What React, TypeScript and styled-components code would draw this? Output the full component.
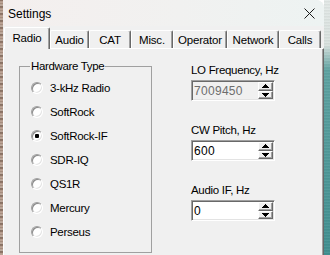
import React from 'react';
import styled, { createGlobalStyle } from 'styled-components';

const GlobalStyle = createGlobalStyle`
  html, body { margin: 0; padding: 0; }
  body {
    font-family: "Liberation Sans", Arial, sans-serif;
    font-size: 11px;
    color: #000;
  }
`;

const tabs = [
    { label: 'Radio', w: 46 },
    { label: 'Audio', w: 39 },
    { label: 'CAT', w: 42 },
    { label: 'Misc.', w: 42 },
    { label: 'Operator', w: 54 },
    { label: 'Network', w: 52 },
    { label: 'Calls', w: 42 },
];

const hardware = ['3-kHz Radio', 'SoftRock', 'SoftRock-IF', 'SDR-IQ', 'QS1R', 'Mercury', 'Perseus'];

const fields = [
    { label: 'LO Frequency, Hz', value: '7009450', disabled: true },
    { label: 'CW Pitch, Hz', value: '600', disabled: false },
    { label: 'Audio IF, Hz', value: '0', disabled: false },
];

const Arrow = ({ down }: { down?: boolean }) => (
    <svg width="7" height="4" viewBox="0 0 7 4" shapeRendering="crispEdges">
        {[0, 1, 2, 3].map(i => {
            const row = down ? 3 - i : i;
            return <rect key={i} x={3 - row} y={i} width={row * 2 + 1} height={1} fill="#000" />;
        })}
    </svg>
);

export default function App() {
    return (
        <>
            <GlobalStyle />
            <Screen>
                <Wallpaper />
                <Window>
                    <TitleBar>
                        <Title>Settings</Title>
                        <svg width="11" height="11" viewBox="0 0 11 11">
                            <path d="M0.5 0.5 L10.5 10.5 M10.5 0.5 L0.5 10.5" stroke="#1a1a1a" strokeWidth="1" />
                        </svg>
                    </TitleBar>
                    <TabRow>
                        {tabs.map((t, i) => (
                            <Tab key={t.label} $w={t.w} $active={i === 0}>{t.label}</Tab>
                        ))}
                    </TabRow>
                    <Panel>
                        <GroupBox>
                            <Legend>Hardware Type</Legend>
                            {hardware.map((h, i) => (
                                <RadioRow key={h}>
                                    <RadioCircle $checked={i === 2} />
                                    <span>{h}</span>
                                </RadioRow>
                            ))}
                        </GroupBox>
                        <FieldColumn>
                            {fields.map(f => (
                                <Field key={f.label}>
                                    <FieldLabel>{f.label}</FieldLabel>
                                    <SpinBox $disabled={f.disabled}>
                                        <SpinValue $disabled={f.disabled}>{f.value}</SpinValue>
                                        <Spinner>
                                            <SpinButton><Arrow /></SpinButton>
                                            <SpinButton><Arrow down /></SpinButton>
                                        </Spinner>
                                    </SpinBox>
                                </Field>
                            ))}
                        </FieldColumn>
                    </Panel>
                </Window>
                <Desktop />
            </Screen>
        </>
    );
}

const Screen = styled.div`
    width: 330px;
    height: 255px;
    overflow: hidden;
    display: flex;
`;

const Wallpaper = styled.div`
    width: 3px;
    background: repeating-linear-gradient(
        180deg,
        #7d6354 0px,
        #c6aea0 2px,
        #9a8273 4px,
        #d8c6ba 5px,
        #6e5648 7px
    );
`;

const Desktop = styled.div`
    flex: 1;
    background:
        repeating-linear-gradient(180deg, rgba(255, 255, 255, 0.08) 0px, rgba(0, 0, 0, 0.08) 2px, rgba(255, 255, 255, 0.05) 3px),
        linear-gradient(180deg, #e8eeec 0px, #dde6e3 45px, #5ea5a4 70px, #3f9192 100%);
`;

const Window = styled.div`
    width: 321px;
    display: flex;
    flex-direction: column;
    background: #f0f0f0;
    border-top-right-radius: 8px;
    overflow: hidden;
`;

const TitleBar = styled.div`
    height: 26px;
    flex: none;
    display: flex;
    align-items: center;
    justify-content: space-between;
    padding: 0 9px 0 5px;
    background: linear-gradient(90deg, #f4efee 0%, #f1f1f0 55%, #edf3f2 100%);
`;

const Title = styled.span`
    font-size: 12px;
    padding-top: 2px;
`;

const TabRow = styled.div`
    height: 22px;
    flex: none;
    display: flex;
    align-items: flex-end;
    padding-left: 1px;
`;

const Tab = styled.div<{ $w: number; $active: boolean }>`
    box-sizing: border-box;
    width: ${p => p.$w}px;
    height: ${p => (p.$active ? 22 : 18)}px;
    margin-bottom: ${p => (p.$active ? -1 : 0)}px;
    position: relative;
    z-index: ${p => (p.$active ? 1 : 0)};
    display: flex;
    align-items: center;
    justify-content: center;
    padding-bottom: ${p => (p.$active ? 2 : 0)}px;
    background: #f0f0f0;
    border-top: 1px solid #fff;
    border-left: 1px solid #fff;
    border-right: 1px solid #696969;
    border-top-left-radius: 2px;
    border-top-right-radius: 2px;
    box-shadow: inset -1px 0 0 #a0a0a0;
    font-size: 11.5px;
    letter-spacing: -0.2px;
`;

const Panel = styled.div`
    flex: 1;
    display: flex;
    align-items: flex-start;
    padding: 11px 0 0 15px;
    border-top: 1px solid #fff;
    border-left: 1px solid #fff;
    border-right: 1px solid #696969;
    box-shadow: inset -1px 0 0 #a0a0a0;
`;

const GroupBox = styled.fieldset`
    box-sizing: border-box;
    width: 133px;
    margin: 0;
    padding: 3px 0 8px 10px;
    border: 1px solid #a0a0a0;
    border-radius: 0;
`;

const Legend = styled.legend`
    padding: 0 1px;
    line-height: 13px;
    font-size: 11.5px;
    letter-spacing: -0.35px;
`;

const RadioRow = styled.div`
    height: 24px;
    display: flex;
    align-items: center;
    gap: 7px;
    font-size: 11.5px;
    letter-spacing: -0.3px;
`;

const RadioCircle = styled.div<{ $checked: boolean }>`
    box-sizing: border-box;
    width: 12px;
    height: 12px;
    margin-left: 1px;
    border-radius: 50%;
    border: 1px solid;
    border-color: #a0a0a0 #ffffff #ffffff #a0a0a0;
    box-shadow: inset 1px 1px 0 #8a8a8a, inset -1px -1px 0 #e3e3e3;
    background: ${p => (p.$checked ? 'radial-gradient(circle, #000 0 2px, #fff 2.5px)' : '#fff')};
`;

const FieldColumn = styled.div`
    margin-left: 39px;
    padding-top: 4px;
    display: flex;
    flex-direction: column;
    gap: 23px;
`;

const Field = styled.div`
    display: flex;
    flex-direction: column;
`;

const FieldLabel = styled.div`
    line-height: 13px;
    margin-bottom: 3px;
    font-size: 11.5px;
    letter-spacing: -0.3px;
`;

const SpinBox = styled.div<{ $disabled: boolean }>`
    box-sizing: border-box;
    width: 84px;
    height: 21px;
    display: flex;
    padding: 1px;
    border: 1px solid;
    border-color: #a0a0a0 #ffffff #ffffff #a0a0a0;
    box-shadow: inset 1px 1px 0 #696969, inset -1px -1px 0 #e3e3e3;
    background: ${p => (p.$disabled ? '#f0f0f0' : '#fff')};
`;

const SpinValue = styled.div<{ $disabled: boolean }>`
    flex: 1;
    display: flex;
    align-items: center;
    padding-left: 1px;
    font-size: 12px;
    letter-spacing: 0.3px;
    color: ${p => (p.$disabled ? '#6d6d6d' : '#000')};
`;

const Spinner = styled.div`
    width: 15px;
    display: flex;
    flex-direction: column;
`;

const SpinButton = styled.div`
    flex: 1;
    box-sizing: border-box;
    display: flex;
    align-items: center;
    justify-content: center;
    background: #f0f0f0;
    border: 1px solid;
    border-color: #fff #696969 #696969 #fff;
    box-shadow: inset -1px -1px 0 #a0a0a0;
`;
